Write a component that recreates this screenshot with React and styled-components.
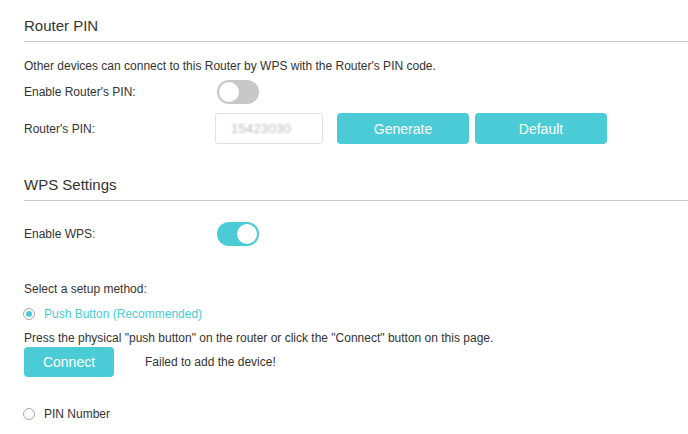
import React from "react";
import styled, { createGlobalStyle } from "styled-components";

const Global = createGlobalStyle`
  html, body { margin: 0; padding: 0; background: #fff; }
  body { font-family: "Liberation Sans", Arial, sans-serif; color: #333; }
`;

const Page = styled.div`
  padding-left: 24px;
  width: 664px;
  height: 434px;
  overflow: hidden;
`;

const SectionTitle = styled.div`
  margin-top: ${(p) => p.$top}px;
  font-size: 15px;
  line-height: 20px;
  color: #333;
  padding-bottom: 5px;
  border-bottom: 1px solid #cccccc;
`;

const Text = styled.div`
  font-size: 12px;
  line-height: 16px;
  margin-top: ${(p) => p.$top || 0}px;
  color: #333;
`;

const Row = styled.div`
  display: flex;
  align-items: center;
  margin-top: ${(p) => p.$top || 0}px;
  height: ${(p) => p.$h}px;
`;

const Label = styled.div`
  width: 191px;
  font-size: 12px;
  color: #333;
  flex: none;
`;

const Toggle = styled.div`
  width: 42px;
  height: 24px;
  border-radius: 12px;
  margin-left: 2px;
  background: ${(p) => (p.$on ? "#4acbd6" : "#c8c8c8")};
  position: relative;
  box-sizing: border-box;
  &::after {
    content: "";
    position: absolute;
    top: 2px;
    left: ${(p) => (p.$on ? "20px" : "2px")};
    width: 20px;
    height: 20px;
    border-radius: 50%;
    background: #fff;
  }
`;

const PinBox = styled.div`
  width: 108px;
  height: 31px;
  box-sizing: border-box;
  border: 1px solid #e2e2e2;
  border-radius: 3px;
  display: flex;
  align-items: center;
  padding-left: 15px;
`;

const Blurred = styled.span`
  font-size: 13px;
  color: #b8b8b8;
  filter: blur(1.1px);
  letter-spacing: 0.3px;
`;

const Button = styled.button`
  width: ${(p) => p.$w}px;
  height: ${(p) => p.$h}px;
  margin-left: ${(p) => p.$ml || 0}px;
  border: none;
  border-radius: 4px;
  background: #4acbd6;
  color: #fff;
  font-family: "Liberation Sans", Arial, sans-serif;
  font-size: 14px;
  padding: 0;
  cursor: pointer;
`;

const RadioRow = styled.div`
  display: flex;
  align-items: center;
  height: 16px;
  margin-top: ${(p) => p.$top}px;
  font-size: 12px;
  color: ${(p) => (p.$checked ? "#4acbd6" : "#333")};
`;

const RadioDot = styled.span`
  width: 12px;
  height: 12px;
  box-sizing: border-box;
  border-radius: 50%;
  border: 1px solid #a8a8a8;
  margin-left: -1px;
  margin-right: 9px;
  display: inline-flex;
  align-items: center;
  justify-content: center;
  &::after {
    content: "";
    width: 6px;
    height: 6px;
    border-radius: 50%;
    background: ${(p) => (p.$checked ? "#4acbd6" : "transparent")};
  }
`;

const Message = styled.span`
  font-size: 12px;
  color: #333;
  margin-left: 31px;
`;

export default function App() {
  return (
    <>
      <Global />
      <Page>
        <SectionTitle $top={16}>Router PIN</SectionTitle>
        <Text $top={16}>
          Other devices can connect to this Router by WPS with the Router's PIN code.
        </Text>
        <Row $top={6} $h={24}>
          <Label>Enable Router's PIN:</Label>
          <Toggle />
        </Row>
        <Row $top={9} $h={31}>
          <Label>Router's PIN:</Label>
          <PinBox>
            <Blurred>15423030</Blurred>
          </PinBox>
          <Button $w={132} $h={31} $ml={14}>Generate</Button>
          <Button $w={132} $h={31} $ml={6}>Default</Button>
        </Row>
        <SectionTitle $top={31}>WPS Settings</SectionTitle>
        <Row $top={21} $h={24}>
          <Label>Enable WPS:</Label>
          <Toggle $on />
        </Row>
        <Text $top={35}>Select a setup method:</Text>
        <RadioRow $top={9} $checked>
          <RadioDot $checked />
          Push Button (Recommended)
        </RadioRow>
        <Text $top={8}>
          Press the physical "push button" on the router or click the "Connect" button on this page.
        </Text>
        <Row $top={1} $h={30}>
          <Button $w={90} $h={30}>Connect</Button>
          <Message>Failed to add the device!</Message>
        </Row>
        <RadioRow $top={29}>
          <RadioDot />
          PIN Number
        </RadioRow>
      </Page>
    </>
  );
}
